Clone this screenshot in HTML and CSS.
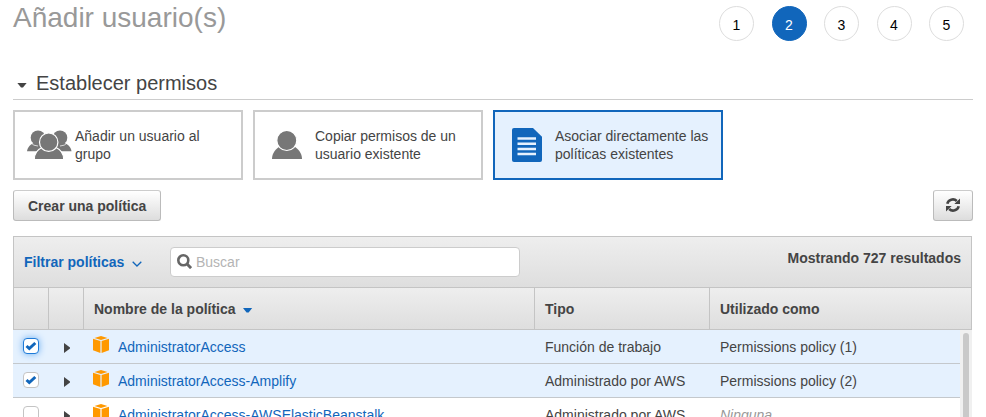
FILE: index.html
```html
<!DOCTYPE html>
<html lang="es">
<head>
<meta charset="utf-8">
<title>Añadir usuario(s)</title>
<link rel="stylesheet" href="styles.css">
</head>
<body>
<svg class="defs" width="0" height="0" aria-hidden="true">
  <symbol id="cube" viewBox="0 0 16 17">
    <path d="M8 0l6.500 2L8 4 1.500 2z"/>
    <path d="M0 2.800l7.400 2.200v12L0 14.200zM16 2.800L8.600 5v12l7.400-2.800z"/>
  </symbol>
  <symbol id="check" viewBox="0 0 12 10">
    <path d="M1.500 5l2.800 2.500L10.300 2" fill="none" stroke="#1166bb" stroke-width="3"/>
  </symbol>
</svg>
<header class="top">
  <h1>Añadir usuario(s)</h1>
  <ol class="steps">
    <li>1</li><li class="current">2</li><li>3</li><li>4</li><li>5</li>
  </ol>
</header>
<main>
  <h2><i class="caret"></i>Establecer permisos</h2>
  <div class="cards">
    <div class="card">
      <svg class="group" width="46" height="30" viewBox="0 0 46 30">
        <g fill="#777">
          <path d="M0 21.200C.5 17 4 14 7.500 12.500h29C40.500 14 44 17 44.500 21.200z"/>
          <circle cx="11" cy="7.700" r="7.300"/><circle cx="33" cy="7.700" r="7.300"/>
          <path d="M3.800 12.800Q6.500 16 11 16M40.500 12.800Q37.500 16 33 16" fill="none" stroke="#fff" stroke-width=".7"/>
          <path d="M7.300 29.500C7.300 24 10.500 19.500 15 17.500h14c4.500 2 7.700 6.500 7.700 12z" stroke="#fff" stroke-width="1.200"/>
          <circle cx="21.700" cy="12.200" r="9.200" stroke="#fff" stroke-width="1.200"/>
        </g>
        <path d="M7 29h31v1H7z" fill="#fff"/>
      </svg>
      <span>Añadir un usuario al grupo</span>
    </div>
    <div class="card">
      <svg width="30" height="30" viewBox="0 0 30 30">
        <path d="M0 29C0 23 4 18.500 8 16.500h14c4 2 8 6.500 8 12.500z" fill="#777"/>
        <circle cx="14.800" cy="10.500" r="10" fill="#777" stroke="#fff" stroke-width="1.200"/>
      </svg>
      <span>Copiar permisos de un usuario existente</span>
    </div>
    <div class="card selected">
      <svg width="30" height="34" viewBox="0 0 30 34">
        <path d="M2 0h19l9 8.700V32q0 2-2 2H2q-2 0-2-2V2q0-2 2-2z" fill="#1166bb"/>
        <path d="M5.500 10.500h18.500M5.500 15.700h18.500M5.500 20.900h18.500M5.500 26.100h18.500" stroke="#e5f1fe" stroke-width="2.500"/>
      </svg>
      <span>Asociar directamente las políticas existentes</span>
    </div>
  </div>
  <div class="actions">
    <button class="btn">Crear una política</button>
    <button class="btn refresh" aria-label="Actualizar">
      <svg width="14" height="14" viewBox="0 0 14 14">
        <path d="M1.300 5.700A5.700 5.500 0 0 1 10.800 3M12.700 8.300A5.700 5.500 0 0 1 3.200 11" fill="none" stroke="#444" stroke-width="2.600"/>
        <path d="M14 .4v5.700H8.300zM0 13.600V7.900h5.700z" fill="#444"/>
      </svg>
    </button>
  </div>
  <section class="panel">
    <div class="toolbar">
      <span class="filter">Filtrar políticas
        <svg width="10" height="6" viewBox="0 0 10 6"><path d="M.7.7L5 5 9.300.7" fill="none" stroke="#1166bb" stroke-width="1.300"/></svg>
      </span>
      <div class="search">
        <svg width="15" height="15" viewBox="0 0 15 15"><circle cx="6.300" cy="6.300" r="5" fill="none" stroke="#666" stroke-width="2.600"/><path d="M9.800 9.800l4.300 4.300" stroke="#666" stroke-width="3"/></svg>
        <input type="text" placeholder="Buscar">
      </div>
      <span class="count">Mostrando 727 resultados</span>
    </div>
    <div class="grid head">
      <div></div><div></div>
      <div>Nombre de la política<i class="caret blue"></i></div>
      <div>Tipo</div><div>Utilizado como</div>
    </div>
    <div class="body">
      <div class="rows">
        <div class="grid row on">
          <div><span class="box focus"><svg width="12" height="10"><use href="#check"/></svg></span></div>
          <div><i class="expand"></i></div>
          <div><svg class="cube" width="16" height="17"><use href="#cube"/></svg><a>AdministratorAccess</a></div>
          <div>Función de trabajo</div><div>Permissions policy (1)</div>
        </div>
        <div class="grid row on">
          <div><span class="box"><svg width="12" height="10"><use href="#check"/></svg></span></div>
          <div><i class="expand"></i></div>
          <div><svg class="cube" width="16" height="17"><use href="#cube"/></svg><a>AdministratorAccess-Amplify</a></div>
          <div>Administrado por AWS</div><div>Permissions policy (2)</div>
        </div>
        <div class="grid row">
          <div><span class="box"></span></div>
          <div><i class="expand"></i></div>
          <div><svg class="cube" width="16" height="17"><use href="#cube"/></svg><a>AdministratorAccess-AWSElasticBeanstalk</a></div>
          <div>Administrado por AWS</div><div class="none">Ninguna</div>
        </div>
      </div>
      <div class="track"><div class="thumb"></div></div>
    </div>
  </section>
</main>
</body>
</html>
```
FILE: styles.css
```css
* { box-sizing: border-box; }
html, body { height: 100%; overflow: hidden; }
body {
  margin: 0;
  padding: 0 13px;
  background: #fff;
  color: #444;
  font: 14px/18px "Liberation Sans", Arial, sans-serif;
}
svg { display: block; flex: none; }
.defs { position: absolute; }
.top {
  display: flex;
  justify-content: space-between;
  height: 70px;
}
h1 {
  margin: 0;
  font-size: 28px;
  font-weight: 400;
  line-height: 36px;
  color: #999;
}
.steps {
  display: flex;
  gap: 17.5px;
  margin: 6px 9px 0 0;
  padding: 0;
  list-style: none;
}
.steps li {
  width: 35px;
  height: 35px;
  border: 1px solid #ddd;
  border-radius: 50%;
  color: #000;
  line-height: 36px;
  text-align: center;
}
.steps .current {
  border-color: #1166bb;
  background: #1166bb;
  color: #fff;
}
h2 {
  display: flex;
  align-items: center;
  width: 960px;
  height: 30px;
  margin: 0;
  padding: 0 0 3px 4px;
  border-bottom: 1px solid #ccc;
  font-size: 20px;
  font-weight: 400;
}
.caret {
  width: 10px;
  height: 5px;
  margin: 4px 9px 0 0;
  background: #444;
  clip-path: polygon(0 0, 100% 0, 60% 100%, 40% 100%);
}
.caret.blue {
  margin: 3px 0 0 7px;
  background: #1166bb;
}
.cards {
  display: flex;
  gap: 10px;
  margin-top: 10px;
}
.card {
  display: flex;
  align-items: center;
  width: 230px;
  height: 70px;
  padding-left: 17px;
  border: 2px solid #ccc;
}
.card svg { margin-right: 13px; }
.card .group { margin: 0 2px 0 -5px; }
.card span { width: 160px; }
.card:first-child span { width: 140px; }
.card.selected {
  border-color: #1166bb;
  background: #e5f1fe;
}
.actions {
  display: flex;
  justify-content: space-between;
  width: 960px;
  margin: 10px 0 15px;
}
.btn {
  height: 31px;
  padding: 1px 14px 0;
  border: 1px solid #bbb;
  border-top-color: #ccc;
  border-radius: 3px;
  background: linear-gradient(#fff, #ddd);
  color: #444;
  font: bold 14px/29px "Liberation Sans", Arial, sans-serif;
}
.refresh {
  width: 40px;
  padding: 0 12px 1px;
}
.panel { width: 959px; }
.toolbar {
  display: flex;
  height: 51px;
  padding: 0 10px;
  border: 1px solid #c4c4c4;
  border-bottom: 0;
  background: linear-gradient(#eee, #dedede);
  font-weight: bold;
}
.filter {
  display: flex;
  align-items: center;
  gap: 8px;
  width: 146px;
  color: #1166bb;
}
.filter svg { margin-top: 3px; }
.search {
  display: flex;
  align-items: center;
  width: 350px;
  height: 30px;
  margin-top: 10px;
  padding-left: 6px;
  border: 1px solid #ccc;
  border-radius: 4px;
  background: #fff;
}
.search svg { margin-top: -2px; }
.search input {
  width: 300px;
  padding: 0 0 0 4px;
  border: 0;
  outline: 0;
  background: none;
  font: 14px "Liberation Sans", Arial, sans-serif;
}
.search input::placeholder { color: #b4b4b4; }
.count {
  margin: 12px 0 0 auto;
}
.grid {
  display: grid;
  grid-template-columns: 36px 35px 451px 175px 1fr;
}
.grid > div {
  display: flex;
  align-items: center;
  padding-left: 10px;
}
.head {
  height: 43px;
  border: 1px solid #c4c4c4;
  background: linear-gradient(#eee, #dedede);
  font-weight: bold;
  grid-template-columns: 35px 35px 451px 175px 1fr;
}
.head > div:not(:last-child) { border-right: 1px solid #c4c4c4; }
.body { display: flex; }
.rows { width: 947px; }
.row {
  height: 34px;
  border-bottom: 1px solid #c4c8cc;
}
.row.on { background: #e5f1fe; }
.row > div { padding-top: 1px; }
.row a {
  margin-left: 9px;
  color: #1166bb;
}
.row .none {
  color: #999;
  font-style: italic;
}
.box {
  display: flex;
  align-items: center;
  justify-content: center;
  width: 16px;
  height: 16px;
  margin-top: -2px;
  border: 1px solid #c4c4c4;
  border-radius: 4px;
  background: #fff;
}
.box.focus {
  border-color: #1f7bd8;
  box-shadow: 0 0 7px #6aaef2;
}
.expand {
  width: 6px;
  height: 10px;
  margin: 2px 0 0 5px;
  background: #444;
  clip-path: polygon(0 0, 100% 45%, 100% 55%, 0 100%);
}
.cube {
  margin: -6px 0 0 -1px;
  fill: #ff9900;
}
.track {
  width: 12px;
  padding: 3px 3px 0;
  background: #f0f0f0;
}
.thumb {
  height: 100%;
  border-radius: 3px 3px 0 0;
  background: #c9c9c9;
}
```
